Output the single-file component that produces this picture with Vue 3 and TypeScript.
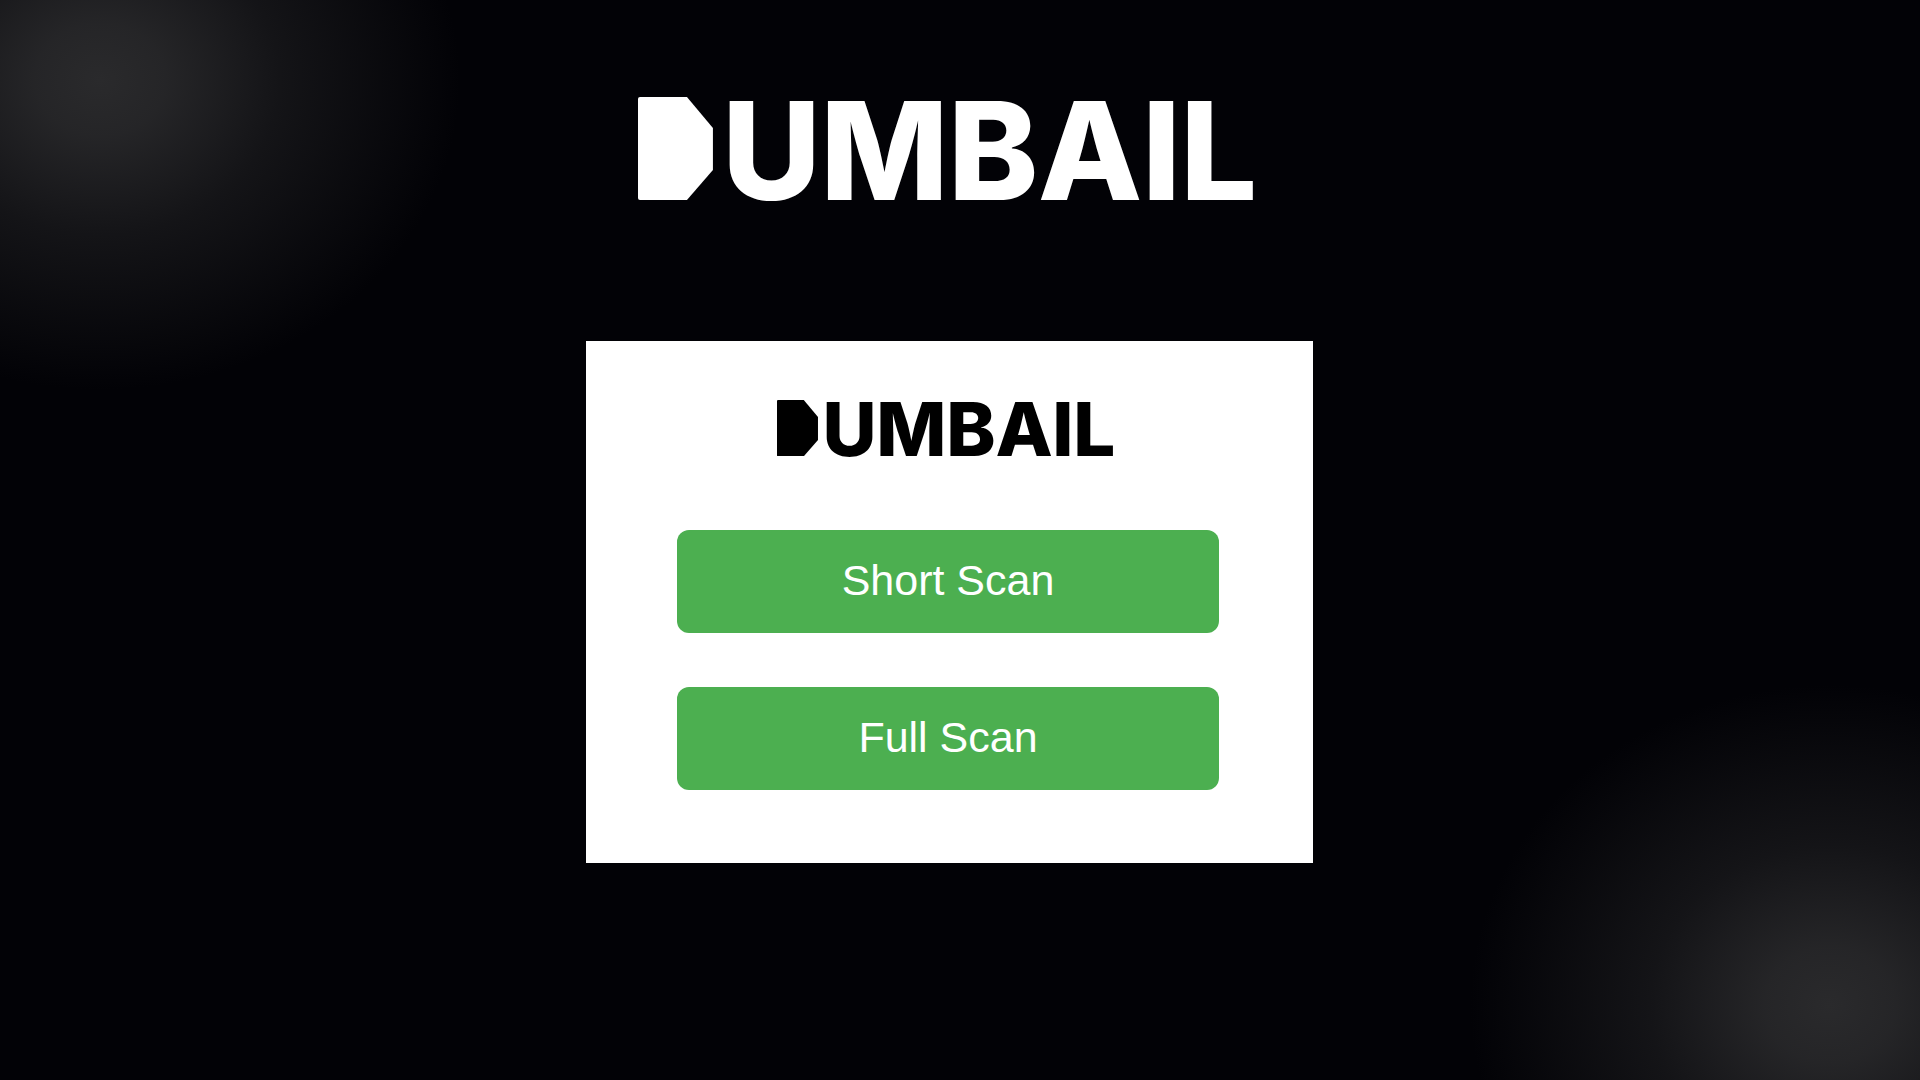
<script setup lang="ts">
const scans: string[] = ['Short Scan', 'Full Scan']
</script>

<template>
  <main class="page">
    <div class="logo logo-large">
      <svg class="logo-mark" viewBox="0 0 75 103" aria-hidden="true">
        <path d="M2 0H49L75 31V73L49 103H2Q0 103 0 101V2Q0 0 2 0Z" />
      </svg>
      <span class="logo-text">UMBAIL</span>
    </div>
    <section class="card">
      <div class="logo logo-small">
        <svg class="logo-mark" viewBox="0 0 75 103" aria-hidden="true">
          <path d="M2 0H49L75 31V73L49 103H2Q0 103 0 101V2Q0 0 2 0Z" />
        </svg>
        <span class="logo-text">UMBAIL</span>
      </div>
      <div class="actions">
        <button v-for="scan in scans" :key="scan" class="scan-button" type="button">{{ scan }}</button>
      </div>
    </section>
  </main>
</template>

<style scoped>
.page {
  box-sizing: border-box;
  height: 1080px;
  padding: 97px 21px 0 0;
  display: flex;
  flex-direction: column;
  align-items: center;
  overflow: hidden;
  background:
    radial-gradient(ellipse 360px 310px at 100px 80px, #2a2a2c 0%, rgba(42, 42, 44, 0.88) 18%, rgba(42, 42, 44, 0.45) 50%, rgba(42, 42, 44, 0) 100%),
    radial-gradient(ellipse 360px 320px at 1830px 1005px, #2a2a2c 0%, rgba(42, 42, 44, 0.88) 18%, rgba(42, 42, 44, 0.45) 50%, rgba(42, 42, 44, 0) 100%),
    #020206;
}
.logo {
  display: flex;
  align-items: baseline;
  font-family: Inter, "Liberation Sans", sans-serif;
  font-weight: 800;
  line-height: 0.78;
}
.logo-large {
  font-size: 136px;
  color: #fff;
  margin-right: 4px;
}
.logo-small {
  font-size: 74.4px;
  color: #000;
  filter: blur(0.6px);
  margin-right: 7px;
}
.logo-mark {
  width: 0.551em;
  height: 0.757em;
  margin-right: 0.063em;
  fill: currentColor;
}
.logo-text {
  letter-spacing: -0.004em;
}
.card {
  box-sizing: border-box;
  width: 727px;
  height: 522px;
  margin-top: 137px;
  padding-top: 58.5px;
  background: #fff;
  display: flex;
  flex-direction: column;
  align-items: center;
}
.actions {
  width: 100%;
  box-sizing: border-box;
  margin-top: 72.5px;
  padding: 0 94px 0 91px;
  display: flex;
  flex-direction: column;
  gap: 54px;
}
.scan-button {
  height: 103px;
  padding: 0 0 3px;
  border: 0;
  border-radius: 12px;
  background: #4caf50;
  color: #fff;
  font-family: "Liberation Sans", Arial, sans-serif;
  font-size: 43px;
}
</style>

<style>
html, body {
  margin: 0;
  background: #020206;
}
</style>
